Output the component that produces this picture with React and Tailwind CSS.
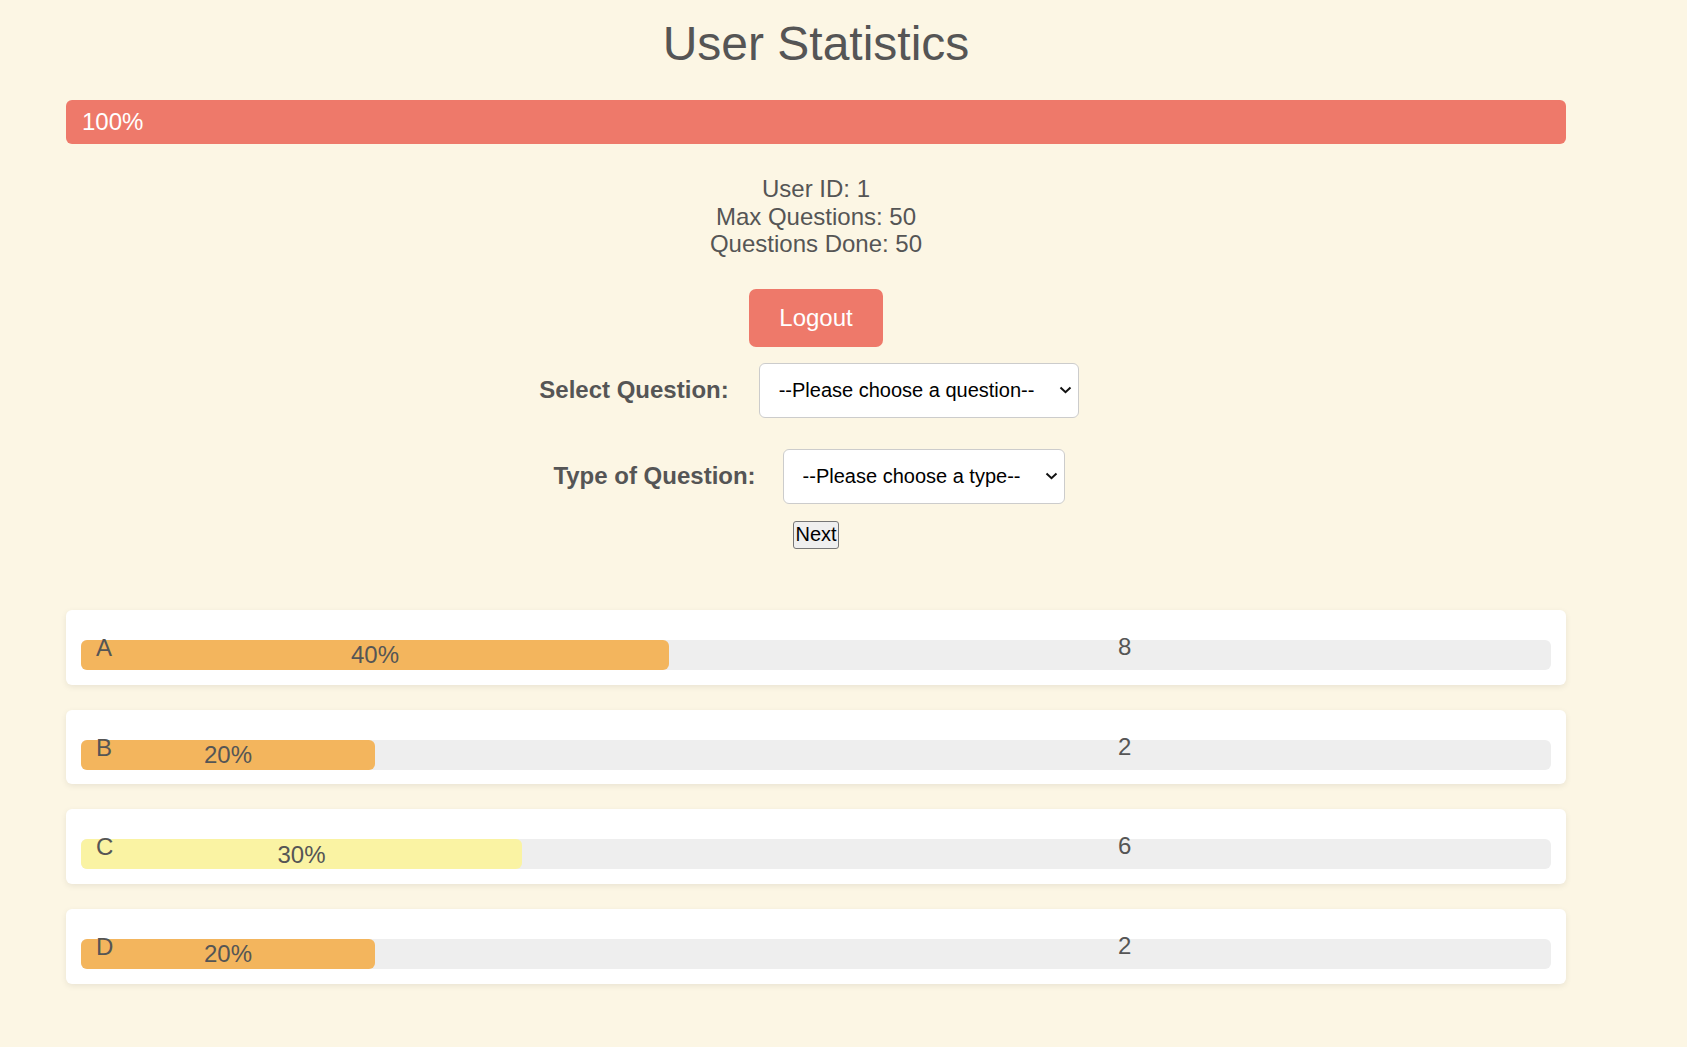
const options = [
  { label: "A", percent: 40, count: 8, color: "bg-[#f3b55d]" },
  { label: "B", percent: 20, count: 2, color: "bg-[#f3b55d]" },
  { label: "C", percent: 30, count: 6, color: "bg-[#faf3a3]" },
  { label: "D", percent: 20, count: 2, color: "bg-[#f3b55d]" },
];

function Chevron() {
  return (
    <svg
      className="pointer-events-none absolute top-1/2 right-[7px] -translate-y-1/2"
      width="13"
      height="8"
      viewBox="0 0 13 8"
      fill="none"
    >
      <path d="M1.5 1.5 L6.5 6.2 L11.5 1.5" stroke="#111" strokeWidth="2" />
    </svg>
  );
}

function SelectBox({ width, placeholder }) {
  return (
    <div className={`relative mr-[14px] ${width}`}>
      <select
        defaultValue=""
        className="h-[55px] w-full appearance-none rounded-[6px] border border-[#cccccc] bg-white pl-[19px] text-[20px] leading-[23px] text-black outline-none"
      >
        <option value="">{placeholder}</option>
      </select>
      <Chevron />
    </div>
  );
}

function OptionCard({ opt }) {
  return (
    <div className="h-[74.67px] rounded-[6px] bg-white px-[15px] pt-[30px] shadow-[0_2px_6px_rgba(0,0,0,0.08)]">
      <div className="relative h-[30px] rounded-[6px] bg-[#eeeeee]">
        <div
          className={`flex h-full items-center justify-center rounded-[6px] ${opt.color}`}
          style={{ width: `${opt.percent}%` }}
        >
          {opt.percent}%
        </div>
        <span className="absolute top-[-6px] left-[15px]">{opt.label}</span>
        <span className="absolute top-[-7px] left-[1037px]">{opt.count}</span>
      </div>
    </div>
  );
}

export default function App() {
  return (
    <div className="min-h-screen bg-[#fcf6e4] font-['Liberation_Sans',Arial,sans-serif] text-[24px] leading-[27.6px] text-[#555555]">
      <div className="ml-[66px] w-[1500px] pb-[64px]">
        <h1 className="pt-[16px] text-center text-[48px] leading-[55.2px]">
          User Statistics
        </h1>

        <div className="mt-[29px] flex h-[44px] items-center rounded-[6px] bg-[#ee796a] pl-[16px] text-white">
          100%
        </div>

        <div className="mt-[31px] text-center">
          <p>User ID: 1</p>
          <p>Max Questions: 50</p>
          <p>Questions Done: 50</p>
        </div>

        <div className="mt-[31px] flex justify-center">
          <button className="rounded-[7px] bg-[#ee796a] px-[30px] py-[15px] text-white">
            Logout
          </button>
        </div>

        <div className="mt-[16px] flex items-center justify-center">
          <label className="mr-[30px] font-bold">Select Question:</label>
          <SelectBox width="w-[320px]" placeholder="--Please choose a question--" />
        </div>

        <div className="mt-[31px] flex items-center justify-center">
          <label className="mr-[27px] font-bold">Type of Question:</label>
          <SelectBox width="w-[282px]" placeholder="--Please choose a type--" />
        </div>

        <div className="mt-[17px] flex justify-center">
          <button className="flex h-[28px] w-[46px] items-center justify-center rounded-[3px] border border-[#767676] bg-[#efefef] text-[20px] leading-[23px] text-black">
            Next
          </button>
        </div>

        <div className="mt-[61.5px] flex flex-col gap-[25px]">
          {options.map((opt) => (
            <OptionCard key={opt.label} opt={opt} />
          ))}
        </div>
      </div>
    </div>
  );
}
